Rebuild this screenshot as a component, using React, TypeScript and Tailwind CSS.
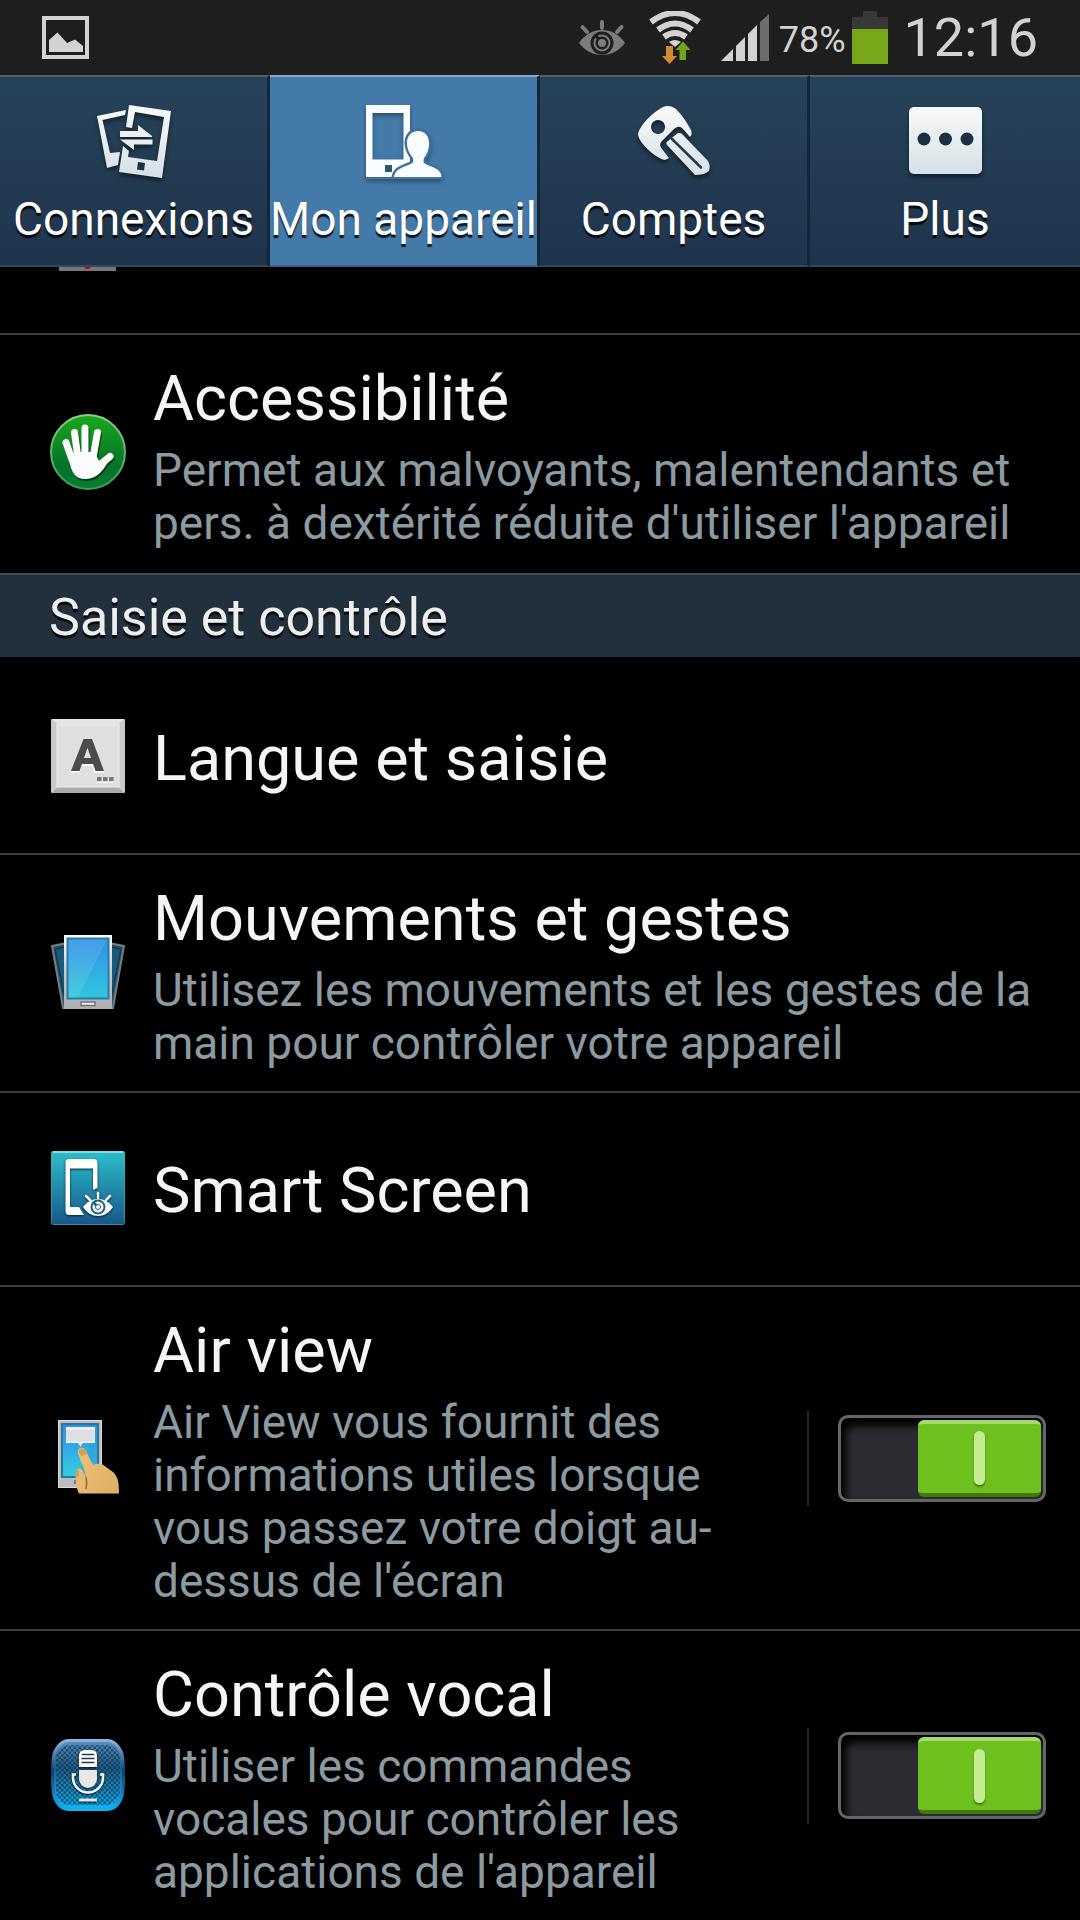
// src/App.tsx

import React, { useState } from 'react';

/* ---------- Status bar icons ---------- */

const PictureIcon = () => (
  <svg width="47" height="43" viewBox="0 0 47 43" aria-hidden="true">
    <rect x="2" y="2" width="43" height="39" fill="none" stroke="#d2d2d2" strokeWidth="4" />
    <path d="M7 36V24l8.500-7.500 9.500 10.500 8-3.500L41 30v6z" fill="#d2d2d2" />
  </svg>
);

const EyeIcon = () => (
  <svg width="46" height="38" viewBox="0 0 46 38" aria-hidden="true">
    <g stroke="#7c7c7c" strokeWidth="4" strokeLinecap="round">
      <path d="M23 3v6M3.500 8l4.500 5M42.500 8L38 13" />
    </g>
    <path d="M0 24C6 15 14 11 23 11s17 4 23 13c-6 8-14 12-23 12S6 32 0 24z" fill="#7c7c7c" />
    <circle cx="23" cy="24" r="10" fill="#7c7c7c" stroke="#1e1e1e" strokeWidth="3" />
    <path d="M23 24l-6-7" stroke="#1e1e1e" strokeWidth="3" />
    <circle cx="23" cy="24" r="6.500" fill="#1e1e1e" />
    <circle cx="23" cy="24" r="4" fill="#7c7c7c" />
  </svg>
);

const WifiIcon = () => (
  <svg width="52" height="54" viewBox="0 0 52 54" aria-hidden="true">
    <g fill="none" stroke="#d2d2d2" strokeWidth="6">
      <path d="M2 11Q26-7 50 11" />
      <path d="M9 19Q26 6 43 19" />
      <path d="M15 26Q26 18 37 26" />
    </g>
    <path d="M20 31q6-4 12 0l-6 5z" fill="#d2d2d2" />
    <path d="M17 35h7v10h4L20.500 53 13 45h4z" fill="#cf8a35" />
    <path d="M30.500 49v-10h-4L34 30.500l7.500 8.500h-4.500v10z" fill="#73a51a" />
  </svg>
);

const SignalIcon = () => (
  <svg width="48" height="47" viewBox="0 0 48 47" aria-hidden="true">
    <g fill="#d2d2d2">
      <path d="M0 47l12-12v12z" />
      <path d="M15 47V32l9-9v24z" />
      <path d="M27 47V20l9-9v36z" />
    </g>
    <path d="M39 47V8l9-8v47z" fill="#6c6c6c" />
  </svg>
);

const BatteryIcon = () => (
  <svg width="36" height="53" viewBox="0 0 36 53" aria-hidden="true">
    <path d="M11 0h14v6h11v12H0V6h11z" fill="#383838" />
    <rect y="18" width="36" height="35" fill="#78a81a" />
  </svg>
);

/* ---------- Tab icons ---------- */

const TabGradient = ({ id }: { id: string }) => (
  <defs>
    <linearGradient id={id} x1="0" y1="0" x2="0" y2="74" gradientUnits="userSpaceOnUse">
      <stop offset="0" stopColor="#fafafa" />
      <stop offset="1" stopColor="#d3dfe6" />
    </linearGradient>
  </defs>
);

const ConnectionsIcon = () => (
  <svg width="74" height="74" viewBox="0 0 74 74" className="drop-shadow-[0_3px_2px_rgba(0,0,0,0.5)]" aria-hidden="true">
    <TabGradient id="tab-connections" />
    <g fill="url(#tab-connections)">
      <path d="M0 11L29 5l-1 5L5.500 15 13 48l10-1-2 13-11 3z" />
      <path d="M32 0l42 6-9 67-43-6 4-26 6 5-1 6 29 4 7-44-29-5-3 16-6-1z" />
      <path d="M23 26h18v-6l14 11v1H23zM23 34.500h32.500v5H37V45z" />
    </g>
    <path d="M41 57l7 1-1 7.500-7-1z" fill="#1c3044" />
  </svg>
);

const DeviceIcon = () => (
  <svg width="76" height="74" viewBox="0 0 76 74" className="drop-shadow-[0_3px_2px_rgba(0,0,0,0.35)]" aria-hidden="true">
    <path d="M0 0h44v72H0zM6.500 8v46.500H37.500V8z" fill="#fafdff" fillRule="evenodd" />
    <rect x="19" y="60" width="7" height="7" fill="#2c5473" />
    <path
      d="M52 26c-7 0-11 5-11 12s3 11 6 15c1 5 0 5-7 8-8 3-11 5-12 11h47.500c0-6-5.500-9-11.500-11-7-3-7-3-6-8 3-4 5-8 5-15s-4-12-11-12z"
      fill="#fafdff"
      stroke="#3f709b"
      strokeWidth="5"
      paintOrder="stroke"
    />
    <path d="M0 72.500h76V74H0z" fill="#447aa8" />
  </svg>
);

const KeyIcon = () => (
  <svg width="72" height="74" viewBox="0 0 72 74" className="drop-shadow-[0_3px_2px_rgba(0,0,0,0.5)]" aria-hidden="true">
    <TabGradient id="tab-key" />
    <path
      d="M29 1c-9 1-27 18-29 28 0 8 17 24 27 26l4-2-7-9c-3-4-2-6 1-9l11-11c4-3 6-3 9 0l7 8c2-2 2-4 1-7-4-7-8-14-15-21-3-2-5-3-9-3zM20 15a7 7 0 1 0 .1 0z"
      fill="url(#tab-key)"
      fillRule="evenodd"
    />
    <path d="M40 28c2 0 3 0 4 1l26 27c2 3 2 7 1 10-4 3-8 4-14 4L29 40c-1-2-1-3 1-4z" fill="url(#tab-key)" />
    <path d="M34 34l29 28.500" stroke="#223a50" strokeWidth="2.500" strokeLinecap="round" />
  </svg>
);

const MoreIcon = () => (
  <svg width="73" height="74" viewBox="0 0 73 74" className="drop-shadow-[0_3px_2px_rgba(0,0,0,0.5)]" aria-hidden="true">
    <TabGradient id="tab-more" />
    <rect y="2" width="73" height="67" rx="5" fill="url(#tab-more)" />
    <g fill="#1c3044">
      <circle cx="15" cy="34" r="6.500" />
      <circle cx="36.500" cy="34" r="6.500" />
      <circle cx="58" cy="34" r="6.500" />
    </g>
  </svg>
);

/* ---------- Settings icons ---------- */

const HandIcon = () => (
  <svg width="76" height="76" viewBox="0 0 76 76" aria-hidden="true">
    <defs>
      <linearGradient id="hand-bg" x1="0" y1="0" x2="0" y2="1">
        <stop offset="0" stopColor="#1ba81c" />
        <stop offset="0.700" stopColor="#06702a" />
        <stop offset="1" stopColor="#068035" />
      </linearGradient>
      <linearGradient id="hand-ring" x1="0" y1="0" x2="0" y2="1">
        <stop offset="0" stopColor="#86cf86" />
        <stop offset="1" stopColor="#3c9a5c" />
      </linearGradient>
    </defs>
    <circle cx="38" cy="38" r="37" fill="url(#hand-bg)" stroke="url(#hand-ring)" strokeWidth="2" />
    <g className="drop-shadow-[1px_2px_0_rgba(0,40,0,0.7)]">
      <path
        d="M16 28.500l6 17M24.500 18.500l3 22M35 14v26M47.500 18.500L43.500 41M60 42.500L46 54"
        stroke="#fcfcfc"
        strokeWidth="7"
        strokeLinecap="round"
      />
      <path d="M18 42l7-4h21c1 7 3 10 6 9l7-1C53 58 46 65 35 65c-12 0-14-10-17-23z" fill="#fcfcfc" />
    </g>
  </svg>
);

const LetterKeyIcon = () => (
  <svg width="74" height="74" viewBox="0 0 74 74" aria-hidden="true">
    <rect width="74" height="74" rx="1" fill="#c9cacc" />
    <path d="M1 0h72l-6 6H7z" fill="#e4e5e6" />
    <path d="M1 74h72l-6-6H7z" fill="#a9aaac" />
    <rect x="6" y="6" width="62" height="62" fill="#dedfe1" stroke="#f0f0f0" />
    <path d="M20 53.500L32 22h8l13 31.500h-9.500L41 47H31l-2.500 6.500zM33 40h7l-3.500-10z" fill="#fff" />
    <path d="M20 52L32.500 20H41l12 32h-8.500L42 45H31l-2.500 7zM33 39h7l-3.500-10z" fill="#4b4b4b" fillRule="evenodd" />
    <path d="M46 58h4.500v4H46zM52 58h4.500v4H52zM58 58h4.500v4H58z" fill="#777" />
    <path d="M46 63h4.500v1H46zM52 63h4.500v1H52zM58 63h4.500v1H58z" fill="#fff" />
  </svg>
);

const MotionIcon = () => (
  <svg width="74" height="74" viewBox="0 0 74 74" aria-hidden="true">
    <defs>
      <linearGradient id="motion-screen" x1="0" y1="0" x2="0" y2="1">
        <stop offset="0" stopColor="#3390e8" />
        <stop offset="1" stopColor="#2fc7dc" />
      </linearGradient>
      <linearGradient id="motion-case" x1="0" y1="0" x2="0" y2="1">
        <stop offset="0" stopColor="#fff" />
        <stop offset="0.500" stopColor="#c8c8ca" />
        <stop offset="1" stopColor="#aeaeb2" />
      </linearGradient>
    </defs>
    <g fill="#1d5879" stroke="#7d7b79" strokeWidth="2">
      <path d="M1 11l20-4v66h-9z" />
      <path d="M73 11L53 7v66h9z" />
    </g>
    <path d="M4 14l10-2v52zM70 14l-10-2v52z" fill="none" stroke="#123b56" strokeWidth="1.500" />
    <rect x="13" width="48" height="74" fill="url(#motion-case)" />
    <path d="M13 0h48v2H13z" fill="#fff" />
    <rect x="16.500" y="3.500" width="41" height="60" fill="url(#motion-screen)" stroke="#267fa6" strokeWidth="2" />
    <path d="M17.500 4.500h38L27 62.500h-9.500z" fill="#fff" opacity="0.100" />
    <rect x="30" y="67" width="14" height="3.500" fill="#eee" stroke="#757579" strokeWidth="1.500" />
  </svg>
);

const SmartScreenIcon = () => (
  <svg width="74" height="74" viewBox="0 0 74 74" aria-hidden="true">
    <defs>
      <linearGradient id="smart-bg" x1="0" y1="0" x2="0" y2="1">
        <stop offset="0" stopColor="#2cbfca" />
        <stop offset="1" stopColor="#16568a" />
      </linearGradient>
    </defs>
    <rect width="74" height="74" rx="2" fill="url(#smart-bg)" />
    <path d="M2 1h70" stroke="#82dce3" strokeWidth="2" />
    <path d="M.5 2v70M73.500 2v70M2 73.500h70" stroke="#50a9c4" opacity="0.600" />
    <g className="drop-shadow-[0_1px_1px_rgba(0,20,40,0.9)]">
      <path
        d="M18 8h25c2 0 3.500 1.500 3.500 4v25L42 39V17.500H19V56h9l5 8H18c-2.500 0-3.500-1.500-3.500-4V12c0-2.500 1-4 3.500-4z"
        fill="#fff"
      />
      <path d="M47 42v5M35 45l4 4M59 45l-4 4" stroke="#fff" strokeWidth="2.500" strokeLinecap="round" />
      <path d="M32 56c4-5 9-8 15-8s11 3 15 8c-4 6-9 9-15 9s-11-3-15-9z" fill="#fff" />
    </g>
    <circle cx="47" cy="56" r="6.500" fill="#fff" stroke="#1b6088" strokeWidth="2" />
    <path d="M42 51l5 5" stroke="#1b6088" strokeWidth="2.500" />
    <circle cx="47" cy="56" r="2.500" fill="#fff" stroke="#1b6088" strokeWidth="1" />
  </svg>
);

const AirViewIcon = () => (
  <svg width="74" height="74" viewBox="0 0 74 74" aria-hidden="true">
    <defs>
      <linearGradient id="air-screen" x1="0" y1="0" x2="0" y2="1">
        <stop offset="0" stopColor="#2f8eea" />
        <stop offset="1" stopColor="#35cddf" />
      </linearGradient>
      <linearGradient id="air-hand" x1="0" y1="0" x2="1" y2="1">
        <stop offset="0" stopColor="#efc27a" />
        <stop offset="1" stopColor="#dcae66" />
      </linearGradient>
    </defs>
    <rect x="7.500" y="0.500" width="43" height="67" fill="#bdbdc1" stroke="#dcdcdc" />
    <rect x="11" y="4" width="36" height="53" fill="url(#air-screen)" stroke="#25779d" strokeWidth="2" />
    <path d="M46 5L27 57h19z" fill="#2f9fd0" opacity="0.500" />
    <path d="M15 7h29v16H32l-2.500 4-2.500-4H15z" fill="#dedfe2" />
    <path d="M15 7h29v3H15zM15 21.500h29V23H15z" fill="#f0f0f0" />
    <rect x="23" y="60" width="13" height="4" fill="#77777b" />
    <path
      d="M27 33c-1-6 6-7 8-2l7 14 3-1c4-1 7 0 10 3l7 5c4 4 6 8 6 21.500H28c-3-6-4-13-3-22 1-4 6-4 7 0l3 6c-1-9-6-17-8-24.500z"
      fill="url(#air-hand)"
    />
    <path d="M27.500 32c0-4 6-5 7.500-1l1 3-6 2zM25 50h3v6l-3 1z" fill="#d79f50" />
    <path d="M35 57c1 4 1 8 0 12" fill="none" stroke="#9b6a2b" strokeWidth="1.500" />
  </svg>
);

const VoiceIcon = () => (
  <svg width="74" height="72" viewBox="0 0 74 72" aria-hidden="true">
    <defs>
      <linearGradient id="voice-bg" x1="0" y1="0" x2="0" y2="1">
        <stop offset="0" stopColor="#5c90c0" />
        <stop offset="0.400" stopColor="#1d5f8a" />
        <stop offset="1" stopColor="#10b4f8" />
      </linearGradient>
      <linearGradient id="voice-rim" x1="0" y1="0" x2="0" y2="1">
        <stop offset="0" stopColor="#8ab4e0" />
        <stop offset="0.450" stopColor="#0d3a78" />
        <stop offset="1" stopColor="#14b0f0" />
      </linearGradient>
      <pattern id="voice-mesh" width="5" height="5" patternUnits="userSpaceOnUse">
        <rect width="2.500" height="2.500" fill="#0c2638" />
        <rect x="2.500" y="2.500" width="2.500" height="2.500" fill="#0c2638" />
      </pattern>
    </defs>
    <path
      d="M18 1.500h38c7 0 12 6 15 13 2 12 2 30 0 43-3 8-8 13-15 13H18c-7 0-12-5-15-13-2-13-2-31 0-43 3-7 8-13 15-13z"
      fill="url(#voice-bg)"
      stroke="url(#voice-rim)"
      strokeWidth="3"
    />
    <rect x="5" y="6" width="64" height="60" rx="14" fill="url(#voice-mesh)" opacity="0.600" />
    <g className="drop-shadow-[0_1px_1px_rgba(0,0,0,0.8)]">
      <path d="M28 28V17q0-6 6-6h6q6 0 6 6v11z" fill="#fff" />
      <path d="M31 15.500h12M30.500 19.500h13M30.500 23.500h13" stroke="#22394a" strokeWidth="1.500" />
      <path d="M28 31h18v9a9 9 0 0 1-18 0z" fill="#e8e8e8" />
      <path d="M25 35.500h-3v3a15 15 0 0 0 30 0v-3h-3" fill="none" stroke="#f5f5f5" strokeWidth="2.500" />
      <path d="M28 61h18" stroke="#d8eef8" strokeWidth="3" />
    </g>
  </svg>
);

/* ---------- Data ---------- */

const tabs = [
  { label: 'Connexions', Icon: ConnectionsIcon },
  { label: 'Mon appareil', Icon: DeviceIcon },
  { label: 'Comptes', Icon: KeyIcon },
  { label: 'Plus', Icon: MoreIcon },
];

interface Setting {
  id: string;
  title: string;
  summary?: string;
  Icon: React.FC;
  toggle?: boolean;
}

const inputSettings: Setting[] = [
  { id: 'language', title: 'Langue et saisie', Icon: LetterKeyIcon },
  {
    id: 'motion',
    title: 'Mouvements et gestes',
    summary: 'Utilisez les mouvements et les gestes de la main pour contrôler votre appareil',
    Icon: MotionIcon,
  },
  { id: 'smart-screen', title: 'Smart Screen', Icon: SmartScreenIcon },
  {
    id: 'air-view',
    title: 'Air view',
    summary: "Air View vous fournit des informations utiles lorsque vous passez votre doigt au-dessus de l'écran",
    Icon: AirViewIcon,
    toggle: true,
  },
  {
    id: 'voice',
    title: 'Contrôle vocal',
    summary: "Utiliser les commandes vocales pour contrôler les applications de l'appareil",
    Icon: VoiceIcon,
    toggle: true,
  },
];

/* ---------- Components ---------- */

const StatusBar = () => (
  <header className="flex h-[75px] shrink-0 items-center justify-between bg-[#1e1e1e] px-[42px] text-[#d2d2d2]">
    <PictureIcon />
    <div className="flex items-center">
      <EyeIcon />
      <div className="ml-6"><WifiIcon /></div>
      <div className="ml-5"><SignalIcon /></div>
      <span className="ml-2.5 pt-1 text-[36px] leading-none">78%</span>
      <div className="ml-1.5"><BatteryIcon /></div>
      <span className="ml-4 text-[54px] leading-none">12:16</span>
    </div>
  </header>
);

const TabBar = () => {
  const [active, setActive] = useState('Mon appareil');
  return (
    <nav className="grid shrink-0 grid-cols-4">
      {tabs.map(({ label, Icon }) => (
        <button
          key={label}
          type="button"
          onClick={() => setActive(label)}
          className={`flex h-48 flex-col items-center border-y-2 border-r-3 border-r-[#14273a] pt-7 text-[46px] leading-[53px] whitespace-nowrap text-white last:border-r-0 text-shadow-[0_3px_1px_rgb(0_0_0/0.8)] ${
            active === label
              ? 'border-t-[#7fa9ce] border-b-[#3b6288] bg-[#447aa8]'
              : 'border-t-[#4d6271] border-b-[#31475a] bg-linear-to-b from-[#274359] to-[#1f344c]'
          }`}
        >
          <Icon />
          <span className="mt-3.5">{label}</span>
        </button>
      ))}
    </nav>
  );
};

const Toggle = ({ id }: { id: string }) => {
  const [on, setOn] = useState(true);
  return (
    <div className="flex shrink-0 items-center">
      <div className="mr-[29px] h-24 w-0.5 bg-[#242424]" />
      <div className="relative flex">
        <input
          id={id}
          type="checkbox"
          checked={on}
          onChange={() => setOn(!on)}
          className="peer h-[87px] w-52 appearance-none rounded-[10px] border-3 border-[#666] bg-[#2b2b31] shadow-[inset_5px_8px_8px_#000]"
        />
        <span className="pointer-events-none absolute top-[5px] left-[5px] flex h-[77px] w-[123px] items-center justify-center rounded-md border-t-4 border-b-4 border-t-[#a8da72] border-b-[#3f7a0c] bg-[#6ec01e] peer-checked:right-[5px] peer-checked:left-auto">
          <span className="h-[54px] w-[11px] rounded-full bg-[#c5ec92] shadow-[0_2px_2px_#3f7a0c]" />
        </span>
      </div>
    </div>
  );
};

const SettingRow = ({ id, title, summary, Icon, toggle }: Setting) => (
  <li className="flex items-center border-b-2 border-[#3c3c3c] pr-[34px] last:border-transparent">
    <div className="mr-[27px] ml-[50px] flex w-19 shrink-0 justify-center pb-0.5">
      <Icon />
    </div>
    <label
      htmlFor={toggle ? id : undefined}
      className={`min-w-0 flex-1 ${summary ? 'pt-[27px] pb-[21px]' : 'pt-[61px] pb-[57px]'} ${toggle ? 'pr-7' : ''}`}
    >
      <span className="block text-[63px] leading-[74px] text-[#f5f5f5]">{title}</span>
      {summary && <span className="mt-2 block text-[46px] leading-[53px] text-[#8c9aa1]">{summary}</span>}
    </label>
    {toggle && <Toggle id={id} />}
  </li>
);

export default function App() {
  return (
    <div className="flex h-screen flex-col overflow-hidden bg-black font-['Roboto',sans-serif]">
      <StatusBar />
      <TabBar />
      <main className="min-h-0 flex-1 overflow-hidden">
        {/* tail of the row scrolled under the tabs */}
        <div className="h-[68px] border-b-2 border-[#3c3c3c] pl-[59px]">
          <svg width="57" height="4" viewBox="0 0 57 4" aria-hidden="true">
            <rect width="57" height="4" fill="#77777b" />
            <path d="M25 0h7l-2 2h-3z" fill="#c00" />
          </svg>
        </div>
        <ul>
          <SettingRow
            id="accessibility"
            title="Accessibilité"
            summary="Permet aux malvoyants, malentendants et pers. à dextérité réduite d'utiliser l'appareil"
            Icon={HandIcon}
          />
        </ul>
        <h2 className="border-t-2 border-[#3f4c59] bg-[#22303d] px-[49px] pt-3.5 pb-2.5 text-[52px] leading-[58px] text-[#eee] text-shadow-[0_3px_1px_rgb(0_0_0/0.8)]">
          Saisie et contrôle
        </h2>
        <ul className="pt-1">
          {inputSettings.map((setting) => (
            <SettingRow key={setting.id} {...setting} />
          ))}
        </ul>
      </main>
    </div>
  );
}
